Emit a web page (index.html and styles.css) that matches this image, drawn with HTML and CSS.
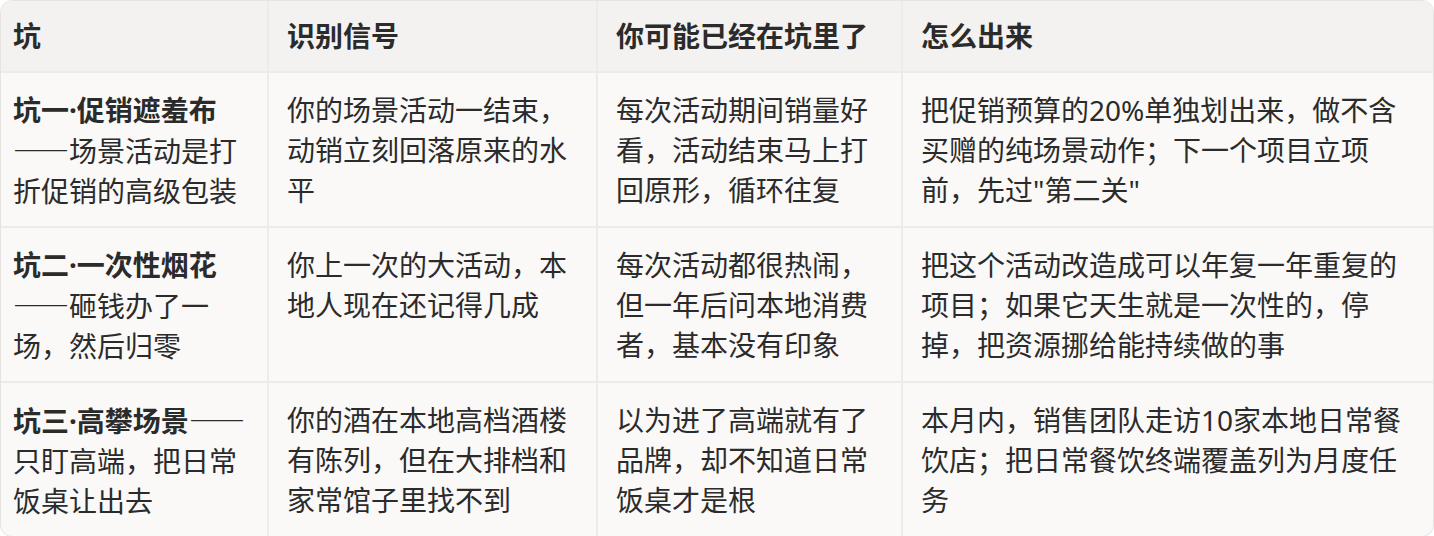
FILE: index.html
```html
<!DOCTYPE html>
<html lang="zh-CN">
<head>
<meta charset="utf-8">
<title>坑</title>
<link rel="stylesheet" href="styles.css">
</head>
<body>
<div class="wrap">
<table class="pits">
  <colgroup>
    <col class="c1"><col class="c2"><col class="c3"><col class="c4">
  </colgroup>
  <thead>
    <tr><th>坑</th><th>识别信号</th><th>你可能已经在坑里了</th><th>怎么出来</th></tr>
  </thead>
  <tbody>
    <tr>
      <td><strong>坑一·促销遮羞布</strong><span class="dash">——</span>场景活动是打折促销的高级包装</td>
      <td>你的场景活动一结束，动销立刻回落原来的水平</td>
      <td>每次活动期间销量好看，活动结束马上打回原形，循环往复</td>
      <td>把促销预算的20%单独划出来，做不含买赠的纯场景动作；下一个项目立项前，先过"第二关"</td>
    </tr>
    <tr>
      <td><strong>坑二·一次性烟花</strong><span class="dash">——</span>砸钱办了一场，然后归零</td>
      <td>你上一次的大活动，本地人现在还记得几成</td>
      <td>每次活动都很热闹，但一年后问本地消费者，基本没有印象</td>
      <td>把这个活动改造成可以年复一年重复的项目；如果它天生就是一次性的，停掉，把资源挪给能持续做的事</td>
    </tr>
    <tr>
      <td><strong>坑三·高攀场景<span class="dash">——</span></strong>只盯高端，把日常饭桌让出去</td>
      <td>你的酒在本地高档酒楼有陈列，但在大排档和家常馆子里找不到</td>
      <td>以为进了高端就有了品牌，却不知道日常饭桌才是根</td>
      <td>本月内，销售团队走访10家本地日常餐饮店；把日常餐饮终端覆盖列为月度任务</td>
    </tr>
  </tbody>
</table>
</div>
</body>
</html>
```
FILE: styles.css
```css
html, body {
  margin: 0;
  padding: 0;
  background: #ffffff;
}
.wrap {
  width: 1434px;
  height: 536px;
  overflow: hidden;
}
.pits {
  width: 1434px;
  table-layout: fixed;
  border-collapse: separate;
  border-spacing: 0;
  border: 1px solid #e6e4e1;
  border-radius: 12px;
  overflow: hidden;
  font-family: "Noto Sans", "Noto Sans CJK SC", sans-serif;
  font-size: 28px;
  line-height: 40px;
  color: #2b2b2b;
  background: #faf9f8;
}
.c1 { width: 268px; }
.c2 { width: 329px; }
.c3 { width: 305px; }
.c4 { width: auto; }
.pits th, .pits td {
  text-align: left;
  vertical-align: top;
  padding: 17px 18px 15px 18px;
  border-right: 2px solid #ecebe8;
  border-bottom: 2px solid #ecebe8;
  word-break: normal;
}
.pits th:last-child, .pits td:last-child {
  border-right: none;
}
.pits tbody tr:last-child td {
  border-bottom: none;
}
.pits th {
  background: #f3f2f0;
  font-weight: 600;
  padding-top: 15px;
  padding-bottom: 15px;
}
.pits th:first-child, .pits td:first-child {
  padding-left: 12px;
}
.pits strong {
  font-weight: 700;
}
.dash {
  font-family: "Noto Sans CJK SC", sans-serif;
}
```
